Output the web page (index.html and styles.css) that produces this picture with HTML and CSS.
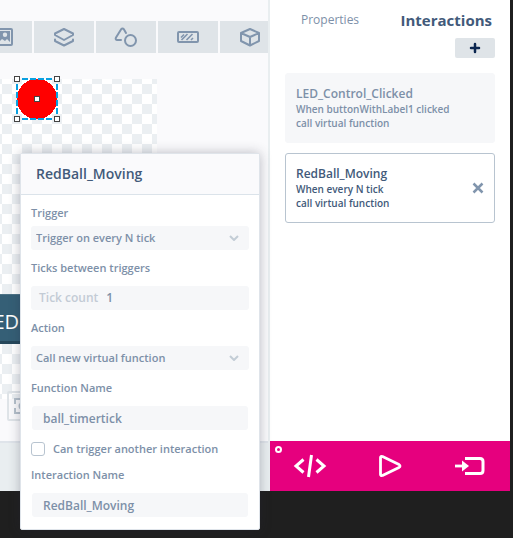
FILE: index.html
```html
<!DOCTYPE html>
<html lang="en">
<head>
<meta charset="utf-8">
<title>Interactions</title>
<link rel="stylesheet" href="styles.css">
</head>
<body>
<div class="app">
  <main class="workspace">
    <div class="toolbar">
      <button class="tool" aria-label="Images"><svg width="24" height="24" viewBox="0 0 24 24"><rect x="2" y="4" width="20" height="16" rx="1" fill="none" stroke="currentColor" stroke-width="2"/><path fill="currentColor" fill-rule="evenodd" d="M5 6h15v11l-3-3-2 2-3-2-3 3-4 1zM15 7.500a2.200 2.200 0 1 0 0 4.400a2.200 2.200 0 1 0 0-4.400z"/></svg></button>
      <button class="tool" aria-label="Containers"><svg width="24" height="24" viewBox="0 0 24 24" fill="none" stroke="currentColor" stroke-width="2" stroke-linejoin="round" stroke-linecap="round"><path d="M12 4l9 4.500v1.500l-9 5-9-5v-1.500z"/><path d="M3 14.500v1.500l9 4.500 9-4.500v-1.500"/></svg></button>
      <button class="tool" aria-label="Shapes"><svg width="24" height="24" viewBox="0 0 24 24" fill="none" stroke="currentColor" stroke-width="2" stroke-linejoin="round" stroke-linecap="round"><path d="M7 15H3q-2-.5-1-2.500l5-8q1.500-1.800 3 0l2 3.500"/><circle cx="16.500" cy="15.500" r="5.500"/></svg></button>
      <button class="tool" aria-label="Progress"><svg width="24" height="24" viewBox="0 0 24 24" fill="none" stroke="currentColor" stroke-width="2"><rect x="2" y="7" width="20" height="10" rx="1"/><path stroke-width="1.600" d="M5 12.500l3-3M5.500 15l6-6M10.500 15l6-6M15 15l2-2"/></svg></button>
      <button class="tool" aria-label="Miscellaneous"><svg width="24" height="24" viewBox="0 0 24 24" fill="none" stroke="currentColor" stroke-width="2" stroke-linejoin="round"><path d="M12 4l9 4v8l-9 4.500L3 16V8zM3 8l9 4 9-4M12 12v8"/></svg></button>
    </div>
    <div class="stage">
      <div class="screen">
        <div class="ball"><i class="grip nw"></i><i class="grip ne"></i><i class="grip sw"></i><i class="grip se"></i><i class="grip mid"></i></div>
        <div class="led">LED</div>
      </div>
      <button class="fit" aria-label="Fit to screen"><svg width="24" height="24" viewBox="0 0 24 24" fill="none" stroke="currentColor" stroke-width="2"><path d="M5 10V5h5M15 5h4v5M19 14v5h-4M10 19H5v-5"/><circle cx="12" cy="12" r="2.500"/></svg></button>
    </div>
    <div class="status"></div>
  </main>
  <aside class="panel">
    <nav class="tabs"><a href="#properties">Properties</a><a class="current" href="#interactions">Interactions</a></nav>
    <button class="add" aria-label="Add interaction"><svg width="12" height="12" viewBox="0 0 12 12" stroke="currentColor" stroke-width="2.500" stroke-linecap="round"><path d="M6 2v8M2 6h8"/></svg></button>
    <section class="card">
      <div><h3>LED_Control_Clicked</h3><p>When buttonWithLabel1 clicked</p><p>call virtual function</p></div>
    </section>
    <section class="card selected">
      <div><h3>RedBall_Moving</h3><p>When every N tick</p><p>call virtual function</p></div>
      <button class="remove" aria-label="Remove"><svg width="12" height="12" viewBox="0 0 12 12" stroke="currentColor" stroke-width="2.500"><path d="M1.500 1.500l9 9M10.500 1.500l-9 9"/></svg></button>
    </section>
    <footer class="actions">
      <i class="dot"></i>
      <button aria-label="Code"><svg width="34" height="24" viewBox="0 0 34 24" fill="none" stroke="currentColor" stroke-width="3"><path d="M10.500 5.500L3 12l7.500 6.500M23.500 5.500L31 12l-7.500 6.500M18.500 1l-3 22"/></svg></button>
      <button aria-label="Run"><svg width="34" height="24" viewBox="0 0 34 24" fill="none" stroke="currentColor" stroke-width="2.800" stroke-linejoin="round"><path d="M7.500 3.500q0-1.500 2-1L26 10.500q2 1.500 0 3L9.500 21.500q-2 .5-2-1z"/></svg></button>
      <button aria-label="Target"><svg width="34" height="24" viewBox="0 0 34 24" fill="none" stroke="currentColor" stroke-width="3"><path d="M12 4.500h15q3 0 3 3v9q0 3-3 3H12"/><path stroke-width="2.800" d="M2 12h8"/><path fill="currentColor" stroke="none" d="M9 6.500l7 5.500-7 5.500z"/></svg></button>
    </footer>
  </aside>
</div>
<form class="dialog">
  <h2>RedBall_Moving</h2>
  <div class="fields">
    <label for="trigger">Trigger</label>
    <div class="pick"><select id="trigger"><option>Trigger on every N tick</option></select><svg width="10" height="6" viewBox="0 0 10 6" fill="none" stroke="currentColor" stroke-width="2"><path d="M1 1l4 4 4-4"/></svg></div>
    <label for="ticks">Ticks between triggers</label>
    <div class="count"><span>Tick count</span><input id="ticks" type="text" value="1"></div>
    <label for="action">Action</label>
    <div class="pick"><select id="action"><option>Call new virtual function</option></select><svg width="10" height="6" viewBox="0 0 10 6" fill="none" stroke="currentColor" stroke-width="2"><path d="M1 1l4 4 4-4"/></svg></div>
    <label for="fn">Function Name</label>
    <input class="text" id="fn" type="text" value="ball_timertick">
    <div class="check"><input id="again" type="checkbox"><label for="again">Can trigger another interaction</label></div>
    <label for="name">Interaction Name</label>
    <input class="text" id="name" type="text" value="RedBall_Moving">
  </div>
</form>
</body>
</html>
```
FILE: styles.css
```css
* { box-sizing: border-box; }
body {
  margin: 0;
  height: 100vh;
  padding: 0 3px 47px 0;
  background: #1f1f1f;
  font: 600 11px/14px "Open Sans", "Noto Sans", sans-serif;
  color: #7d90a8;
  overflow: hidden;
}
h2, h3, p { margin: 0; font-weight: 600; }
button { border: 0; padding: 0; background: none; color: inherit; font: inherit; }
svg { display: block; flex: none; }

.app { display: grid; grid-template-columns: minmax(0, 1fr) 240px; height: 100%; }
.workspace {
  display: flex;
  flex-direction: column;
  padding-top: 21px;
  background: #fafafc;
  border-right: 2px solid #e9eef0;
  overflow: hidden;
}
.toolbar { display: flex; gap: 2px; margin-left: -28px; }
.tool {
  flex: none;
  width: 60px;
  height: 32px;
  display: grid;
  place-items: center;
  background: #dfe4e8;
  color: #8195ad;
}
.stage { flex: 1; position: relative; padding-top: 26px; }
.screen {
  position: relative;
  width: 157px;
  height: 320px;
  background: conic-gradient(#fff 25%, #ebeff2 0 50%, #fff 0 75%, #ebeff2 0) 2px 5px / 20px 20px;
}
.ball {
  position: absolute;
  left: 16px;
  top: -1px;
  width: 42px;
  height: 42px;
  background:
    repeating-linear-gradient(90deg, #0aa0e0 0 6px, transparent 6px 8px) 6px 0 / 100% 2px no-repeat,
    repeating-linear-gradient(90deg, #0aa0e0 0 6px, transparent 6px 8px) 6px 100% / 100% 2px no-repeat,
    repeating-linear-gradient(#0aa0e0 0 6px, transparent 6px 8px) 0 6px / 2px 100% no-repeat,
    repeating-linear-gradient(#0aa0e0 0 6px, transparent 6px 8px) 100% 6px / 2px 100% no-repeat,
    radial-gradient(circle, #f00 20px, transparent 20px);
}
.grip { position: absolute; width: 6px; height: 6px; background: #fff; border: 1px solid #444; }
.nw { left: -2px; top: -2px; }
.ne { right: -2px; top: -2px; }
.sw { left: -2px; bottom: -2px; }
.se { right: -2px; bottom: -2px; }
.mid { left: 18px; top: 18px; }
.led {
  position: absolute;
  left: -60px;
  top: 215px;
  width: 140px;
  height: 50px;
  padding-left: 43px;
  background: #355f76;
  border-top: 1px solid #4d7386;
  border-bottom: 3px solid #25475a;
  color: #fff;
  font-size: 20px;
  font-weight: 400;
  line-height: 54px;
}
.fit {
  position: absolute;
  left: 7px;
  bottom: 20px;
  width: 30px;
  height: 30px;
  display: grid;
  place-items: center;
  border: 2px solid #dfe4e8;
  border-radius: 2px;
  color: #b5c0cb;
}
.status { height: 50px; border-top: 2px solid #dfe4ea; background: #e9eef0; }

.panel { display: flex; flex-direction: column; background: #fff; }
.tabs {
  display: flex;
  justify-content: space-between;
  align-items: center;
  padding: 8px 18px 0 31px;
  line-height: 24px;
}
.tabs a { color: inherit; font-size: 12px; font-weight: 500; text-decoration: none; }
.tabs .current { color: #425a7a; font-size: 15px; font-weight: 700; }
.add {
  align-self: flex-end;
  width: 40px;
  height: 20px;
  margin: 6px 15px 15px;
  display: grid;
  place-items: center;
  background: #dfe4e8;
  border-radius: 2px;
  color: #0b2650;
}
.card {
  display: flex;
  align-items: center;
  justify-content: space-between;
  height: 70px;
  margin: 0 15px 10px;
  padding: 0 10px;
  border: 1px solid #f6f7f9;
  border-radius: 3px;
  background: #f6f7f9;
}
.card h3 { font-size: 12px; line-height: 16px; }
.card p { font-size: 10px; }
.selected { background: #fff; border-color: #b8c4d0; color: #425a7a; }
.remove { color: #8195ad; }
.actions {
  position: relative;
  display: flex;
  align-items: center;
  height: 50px;
  margin-top: auto;
  background: #e6007e;
  color: #fff;
}
.actions button { flex: 1; display: grid; place-items: center; }
.dot {
  position: absolute;
  left: 5px;
  top: 5px;
  width: 7px;
  height: 7px;
  border: 2px solid #fff;
  border-radius: 50%;
}

.dialog {
  position: absolute;
  left: 20px;
  top: 153px;
  width: 240px;
  background: #fff;
  border: 1px solid #dfe4ea;
  border-radius: 2px;
  box-shadow: 0 0 12px rgba(40, 40, 60, .3);
}
.dialog h2 {
  padding: 0 15px;
  border-bottom: 1px solid #dbe3ea;
  background: #fafafc;
  color: #425a7a;
  font-size: 14px;
  line-height: 40px;
}
.fields { display: flex; flex-direction: column; padding: 11px 10px 0; }
.fields > label { line-height: 14px; margin-bottom: 11px; }
.fields > label:first-child { margin-bottom: 6px; }
.pick, .count, .text {
  height: 24px;
  margin-bottom: 11px;
  background: #f6f7f9;
  border: 0;
  border-radius: 3px;
}
input, select { color: inherit; font: inherit; outline: 0; }
.pick { position: relative; }
.pick select {
  appearance: none;
  width: 100%;
  height: 100%;
  padding: 0 5px;
  border: 0;
  background: none;
}
.pick svg { position: absolute; right: 10px; top: 9px; color: #c3cdd6; }
.count { display: flex; align-items: center; gap: 8px; padding: 0 8px; font-size: 12px; }
.count span { color: #c3cbd5; }
.count input { flex: 1; min-width: 0; padding: 0; border: 0; background: none; }
.text { margin: 0 1px 12px; padding: 0 11px; font-size: 12px; }
.check { display: flex; align-items: center; gap: 8px; margin-bottom: 12px; }
.check input {
  appearance: none;
  width: 14px;
  height: 14px;
  margin: 0;
  border: 1px solid #b8c4d0;
  border-radius: 3px;
}
```
